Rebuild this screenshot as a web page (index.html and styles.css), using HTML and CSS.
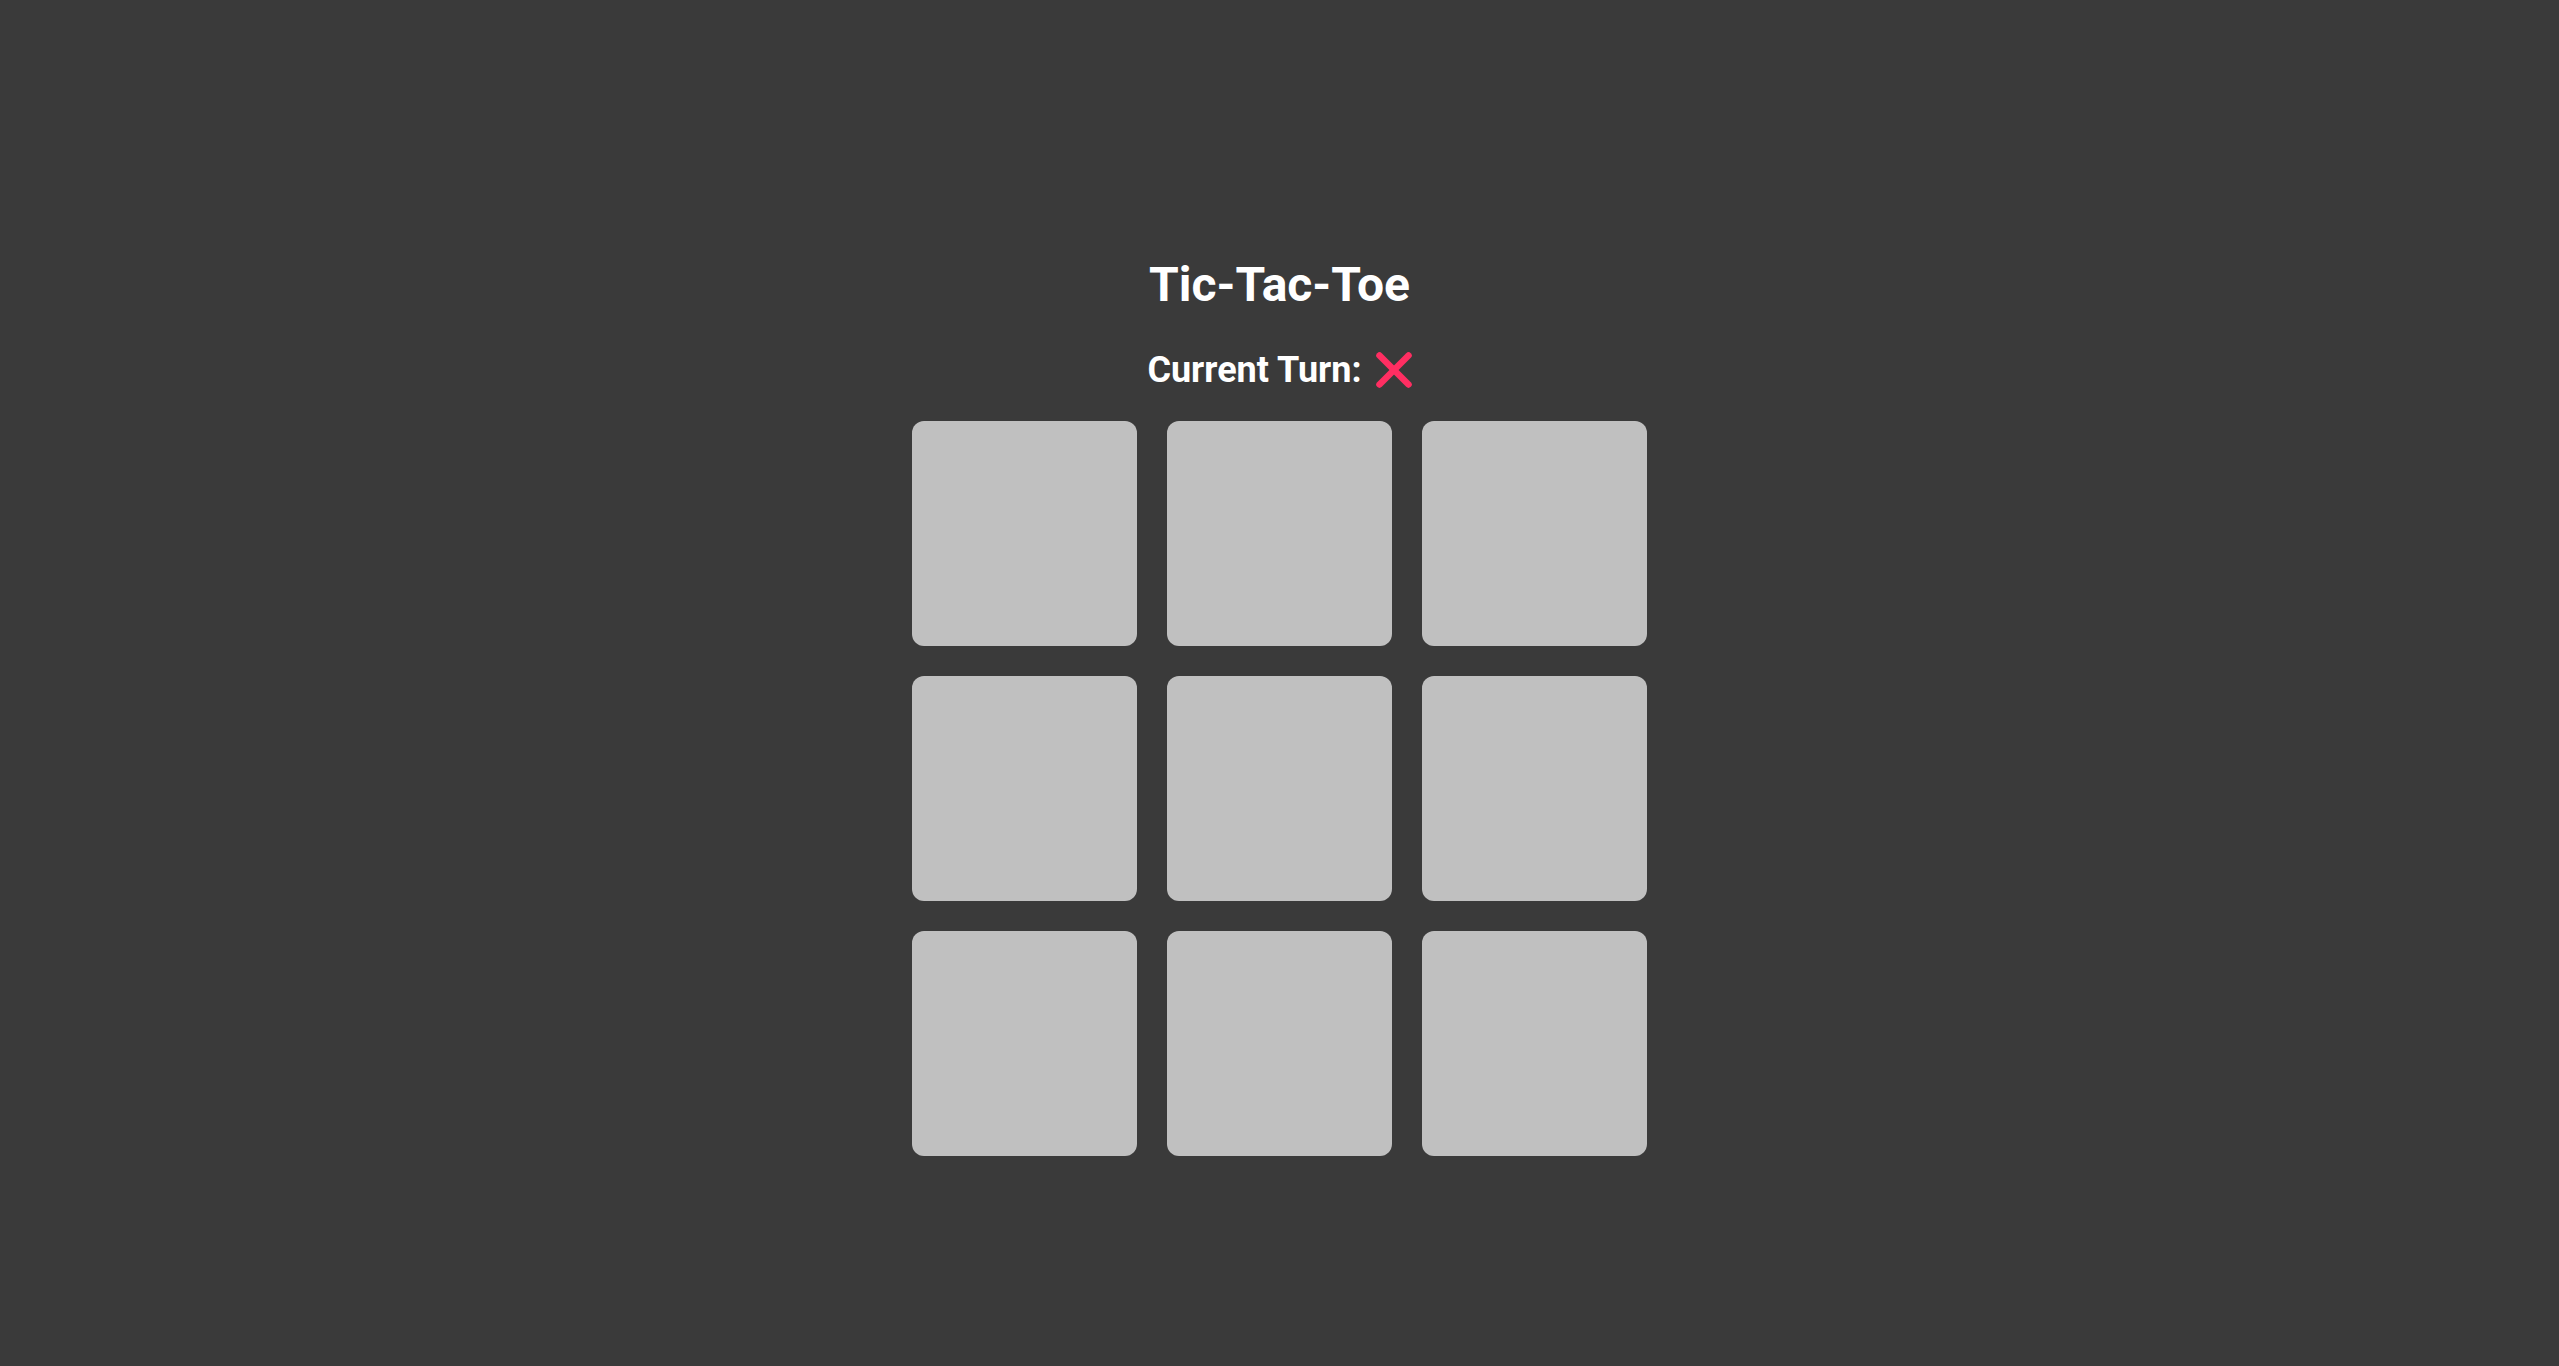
FILE: index.html
```html
<!DOCTYPE html>
<html lang="en">
<head>
<meta charset="utf-8">
<title>Tic-Tac-Toe</title>
<link rel="stylesheet" href="styles.css">
</head>
<body>
<main class="game">
  <h1 class="title">Tic-Tac-Toe</h1>
  <div class="turn">
    <span class="turn-label">Current Turn:</span>
    <svg class="turn-icon" width="36" height="36" viewBox="0 0 36 36" aria-label="X">
      <line x1="3.5" y1="3.5" x2="32.5" y2="32.5"/>
      <line x1="32.5" y1="3.5" x2="3.5" y2="32.5"/>
    </svg>
  </div>
  <div class="board">
    <div class="cell"></div>
    <div class="cell"></div>
    <div class="cell"></div>
    <div class="cell"></div>
    <div class="cell"></div>
    <div class="cell"></div>
    <div class="cell"></div>
    <div class="cell"></div>
    <div class="cell"></div>
  </div>
</main>
</body>
</html>
```
FILE: styles.css
```css
html, body {
  margin: 0;
  padding: 0;
}
body {
  background: #3a3a3a;
  color: #ffffff;
  font-family: Roboto, "Liberation Sans", sans-serif;
  min-height: 100vh;
}
.game {
  display: flex;
  flex-direction: column;
  align-items: center;
  padding-top: 257px;
}
.title {
  margin: 0;
  font-size: 48px;
  line-height: 56px;
  font-weight: 700;
}
.turn {
  margin-top: 36px;
  display: flex;
  align-items: center;
  gap: 14px;
  height: 42px;
}
.turn-label {
  font-size: 36px;
  line-height: 42px;
  font-weight: 700;
}
.turn-icon {
  display: block;
  stroke: #ff2e62;
  stroke-width: 6.5;
  stroke-linecap: round;
}
.board {
  margin-top: 30px;
  display: grid;
  grid-template-columns: repeat(3, 225px);
  grid-auto-rows: 225px;
  gap: 30px;
}
.cell {
  background: #c0c0c0;
  border-radius: 12px;
}
```
